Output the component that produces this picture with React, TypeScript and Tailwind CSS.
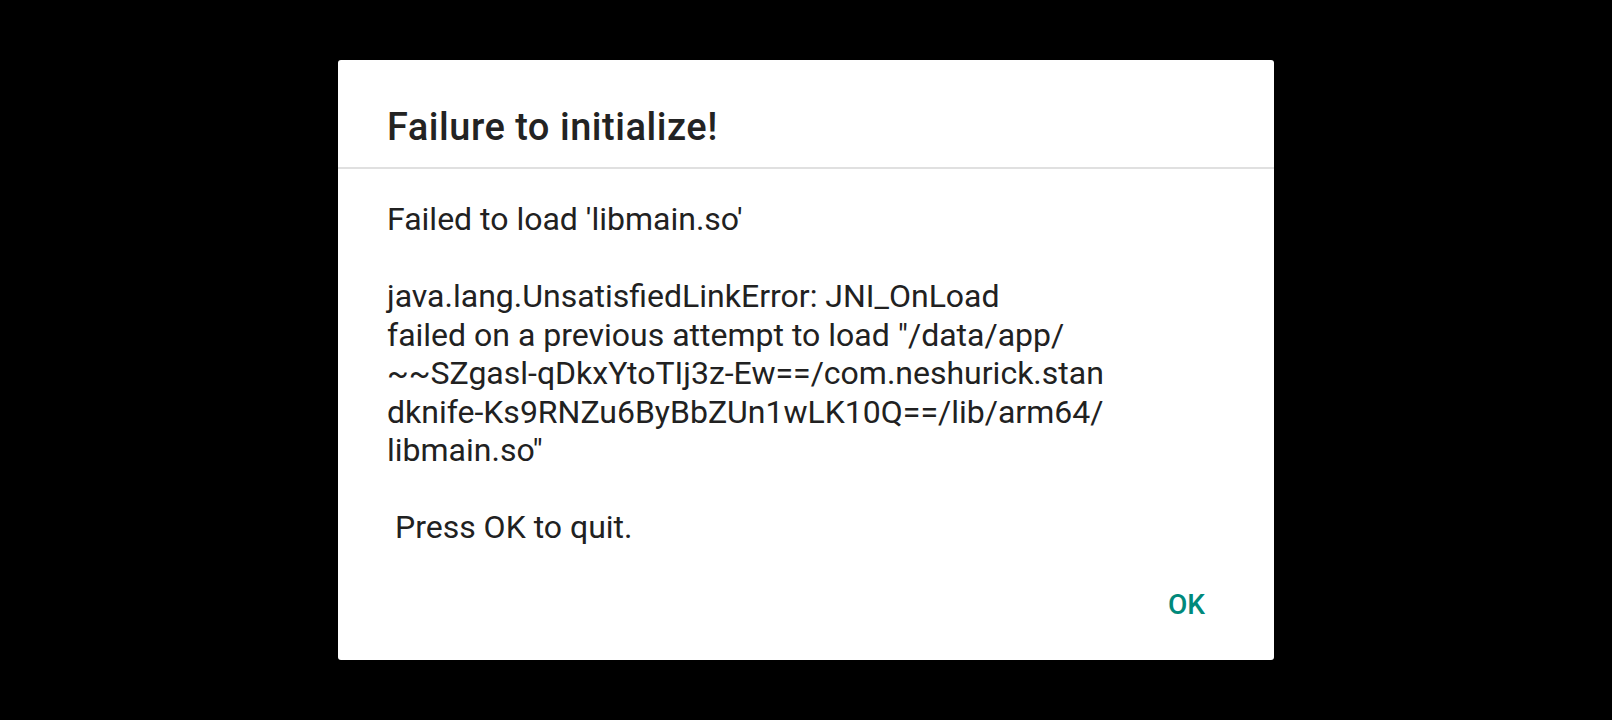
import React from 'react';

const bodyLines = [
  "Failed to load 'libmain.so'",
  '',
  'java.lang.UnsatisfiedLinkError: JNI_OnLoad',
  'failed on a previous attempt to load "/data/app/',
  '~~SZgasl-qDkxYtoTIj3z-Ew==/com.neshurick.stan',
  'dknife-Ks9RNZu6ByBbZUn1wLK10Q==/lib/arm64/',
  'libmain.so"',
  '',
  ' Press OK to quit.',
];

const App: React.FC = () => {
  return (
    <div className="w-full h-[720px] bg-black flex items-center justify-center font-['Roboto',sans-serif]">
      <div className="w-[936px] bg-white rounded-[3px] flex flex-col">
        {/* Title */}
        <div className="pt-[45px] pb-[18px] px-[49px]">
          <h1 className="font-['Roboto_Medium','Roboto',sans-serif] text-[38px] leading-[44px] font-medium tracking-[0.5px] text-[#232323]">
            Failure to initialize!
          </h1>
        </div>
        <div className="h-[2px] bg-[#e0e0e0]" />

        {/* Message */}
        <div className="pt-[31px] px-[49px] text-[32px] leading-[38.5px] text-[#212121]">
          {bodyLines.map((line, i) => (
            <div key={i} className="whitespace-pre h-[38.5px]">
              {line}
            </div>
          ))}
        </div>

        {/* Actions */}
        <div className="flex justify-end pt-[41px] pb-[39px] pr-[69px]">
          <button className="font-['Roboto_Medium','Roboto',sans-serif] text-[28px] leading-[33px] font-medium text-[#00897b]">
            OK
          </button>
        </div>
      </div>
    </div>
  );
};

export default App;
